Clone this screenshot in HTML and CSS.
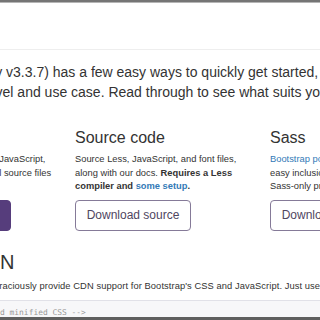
FILE: index.html
```html
<!DOCTYPE html>
<html lang="en">
<head>
<meta charset="utf-8">
<title>Getting started · Bootstrap</title>
<link rel="stylesheet" href="styles.css">
</head>
<body>
<div class="frame-top"></div>
<main class="container">
  <h1 class="page-header">Download</h1>
  <p class="lead">Bootstrap (currently v3.3.7) has a few easy ways to quickly get started, each one appealing<br><span class="l2">to a different skill level and use case. Read through to see what suits your particular needs.</span></p>
  <div class="row">
    <div class="col">
      <h3>Bootstrap</h3>
      <p>Compiled and minified CSS, JavaScript,<br>and fonts. No docs or original source files<br>are included.</p>
      <p class="btn-line"><a class="btn btn-lg btn-primary" href="#">Download Bootstrap</a></p>
    </div>
    <div class="col">
      <h3>Source code</h3>
      <p>Source Less, JavaScript, and font files,<br>along with our docs. <strong>Requires a Less<br>compiler and <a href="#">some setup</a>.</strong></p>
      <p class="btn-line"><a class="btn btn-lg btn-outline" href="#">Download source</a></p>
    </div>
    <div class="col">
      <h3>Sass</h3>
      <p><a href="#">Bootstrap ported from Less to Sass</a> for<br>easy inclusion in Rails, Compass, or<br>Sass-only projects.</p>
      <p class="btn-line"><a class="btn btn-lg btn-outline" href="#">Download Sass</a></p>
    </div>
  </div>
  <h2>Bootstrap CDN</h2>
  <p class="oneline">The folks over at <a href="#">MaxCDN</a> graciously provide CDN support for Bootstrap's CSS and JavaScript. Just use these <a href="#">Bootstrap CDN</a> links.</p>
  <div class="highlight"><pre><code><span class="c">&lt;!-- Latest compiled and minified CSS --&gt;</span>
&lt;link rel="stylesheet" href="bootstrap.min.css"&gt;</code></pre></div>
</main>
<div class="frame-bottom"></div>
</body>
</html>
```

FILE: styles.css
```css
* { box-sizing: border-box; }

html, body {
  margin: 0;
  padding: 0;
  background: #fff;
  overflow: hidden;
}

body {
  width: 320px;
  height: 320px;
  font-family: "Liberation Sans", Arial, sans-serif;
  font-size: 9.333px;
  line-height: 1.42857;
  color: #333;
}

a {
  color: #337ab7;
  text-decoration: none;
}

.frame-top {
  height: 3px;
  background: #757575;
  border-bottom: 1px solid #b5b5b5;
}

.container {
  margin-left: -120px;
  width: 565px;
}

.page-header {
  margin: 13.6px 0 13.333px;
  padding-bottom: 6px;
  border-bottom: 1px solid #eee;
  font-size: 24px;
  line-height: 1.1;
  font-weight: 500;
}

.lead {
  margin: 0 0 13.333px;
  font-size: 14px;
  line-height: 1.4;
  white-space: nowrap;
}

.lead .l2 {
  margin-left: -4px;
}

.row {
  display: grid;
  grid-template-columns: repeat(3, 175px);
  column-gap: 20px;
}

h3 {
  margin: 13.333px 0 6.667px;
  font-size: 16px;
  line-height: 1.1;
  font-weight: 500;
  white-space: nowrap;
}

p {
  margin: 0 0 6.667px;
  white-space: nowrap;
}

.oneline {
  margin-left: 0;
  letter-spacing: 0.08px;
}

.btn-line {
  display: flex;
}

.btn {
  display: inline-block;
  padding: 6.667px 10.667px;
  font-size: 12px;
  line-height: 1.3333;
  border: 1px solid transparent;
  border-radius: 4px;
  white-space: nowrap;
}

.btn-primary {
  background: #563d7c;
  border-color: #563d7c;
  color: #fff;
}

.btn-outline {
  background: transparent;
  border-color: #857a98;
  color: #4f465f;
}

h2 {
  margin: 13.333px 0 6.667px;
  font-size: 20px;
  line-height: 1.1;
  font-weight: 500;
  white-space: nowrap;
}

.highlight {
  padding: 6px 9.333px;
  margin-bottom: 9.333px;
  background: #f7f7f9;
  border: 1px solid #e1e1e8;
  border-radius: 4px;
}

.highlight pre {
  margin: 0;
  font-family: "DejaVu Sans Mono", "Liberation Mono", monospace;
  font-size: 7.93px;
  line-height: 12.4px;
  color: #333;
}

.highlight .c {
  color: #999;
}

.frame-bottom {
  position: fixed;
  left: 0;
  right: 0;
  bottom: 0;
  height: 3px;
  background: #5f5f5f;
}
```
